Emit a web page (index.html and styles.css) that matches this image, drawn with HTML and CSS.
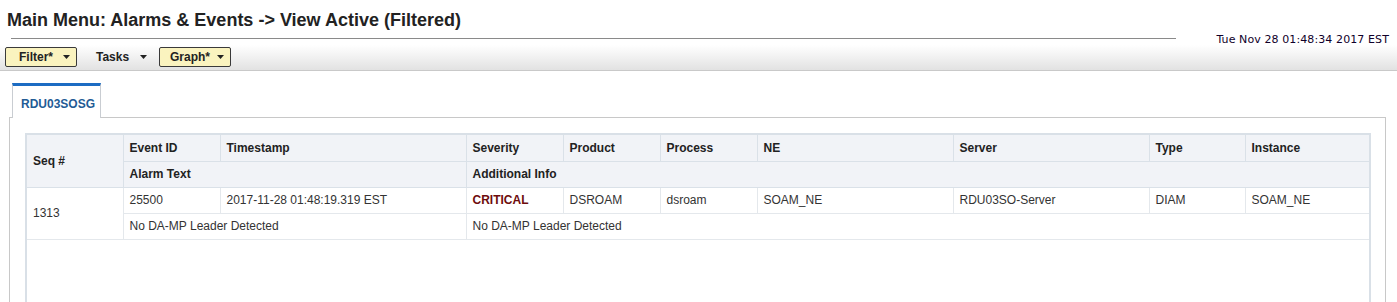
FILE: index.html
```html
<!DOCTYPE html>
<html>
<head>
<meta charset="utf-8">
<link rel="stylesheet" href="styles.css">
</head>
<body>
<div class="page-head">
  <h1 class="title">Main Menu: Alarms &amp; Events -&gt; View Active (Filtered)</h1>
  <div class="rule-row">
    <div class="rule"></div>
    <div class="clock">Tue Nov 28 01:48:34 2017 EST</div>
  </div>
</div>
<div class="toolbar">
  <div class="menu menu-active menu-filter"><span>Filter*</span><svg class="caret" width="7" height="4" viewBox="0 0 7 4"><path d="M0 0H7L3.5 4Z" fill="#222"/></svg></div>
  <div class="menu menu-tasks"><span>Tasks</span><svg class="caret" width="7" height="4" viewBox="0 0 7 4"><path d="M0 0H7L3.5 4Z" fill="#222"/></svg></div>
  <div class="menu menu-active menu-graph"><span>Graph*</span><svg class="caret" width="7" height="4" viewBox="0 0 7 4"><path d="M0 0H7L3.5 4Z" fill="#222"/></svg></div>
</div>
<div class="tabs">
  <div class="tab">RDU03SOSG</div>
</div>
<div class="panel">
  <div class="grid-wrap">
    <table class="grid">
      <colgroup>
        <col class="c-seq"><col class="c-eid"><col class="c-ts"><col class="c-sev"><col class="c-prod"><col class="c-proc"><col class="c-ne"><col class="c-srv"><col class="c-type"><col class="c-inst">
      </colgroup>
      <thead>
        <tr>
          <th rowspan="2">Seq #</th>
          <th>Event ID</th>
          <th>Timestamp</th>
          <th>Severity</th>
          <th>Product</th>
          <th>Process</th>
          <th>NE</th>
          <th>Server</th>
          <th>Type</th>
          <th>Instance</th>
        </tr>
        <tr>
          <th colspan="2">Alarm Text</th>
          <th colspan="7">Additional Info</th>
        </tr>
      </thead>
      <tbody>
        <tr>
          <td rowspan="2">1313</td>
          <td>25500</td>
          <td>2017-11-28 01:48:19.319 EST</td>
          <td class="sev-critical">CRITICAL</td>
          <td>DSROAM</td>
          <td>dsroam</td>
          <td>SOAM_NE</td>
          <td>RDU03SO-Server</td>
          <td>DIAM</td>
          <td>SOAM_NE</td>
        </tr>
        <tr>
          <td colspan="2">No DA-MP Leader Detected</td>
          <td colspan="7">No DA-MP Leader Detected</td>
        </tr>
      </tbody>
    </table>
  </div>
</div>
</body>
</html>
```
FILE: styles.css
```css
* { box-sizing: border-box; }
html, body { margin: 0; padding: 0; background: #fff; }
body {
  font-family: "Liberation Sans", Arial, sans-serif;
  color: #222;
  height: 302px;
  overflow: hidden;
}

.title {
  margin: 0;
  padding: 9px 0 0 7px;
  font-size: 18px;
  line-height: 22px;
  font-weight: bold;
  color: #222;
}

.rule-row {
  display: flex;
  align-items: center;
  height: 14px;
}
.rule {
  flex: 0 0 1165px;
  margin-left: 11px;
  height: 1px;
  background: #8a8a8a;
}
.clock {
  margin-left: auto;
  padding-right: 8px;
  margin-top: 3px;
  font-family: "DejaVu Sans", Verdana, sans-serif;
  font-size: 11px;
  line-height: 14px;
  letter-spacing: 0.1px;
  color: #10002a;
}

.toolbar {
  display: flex;
  align-items: flex-start;
  height: 26px;
  padding: 2px 0 0 5px;
  background: linear-gradient(#ffffff, #e2e2e2);
  border-bottom: 1px solid #c9c9c9;
}
.menu {
  display: flex;
  align-items: center;
  height: 20px;
  font-size: 12px;
  font-weight: bold;
  color: #222;
}
.menu-active {
  width: 72px;
  padding-left: 13px;
  background: #faf3bf;
  border: 1px solid #3a3a3a;
  border-radius: 2px;
}
.menu-graph { margin-left: 11px; padding-left: 10px; }
.menu-tasks {
  width: 52px;
  margin-left: 19px;
}
.caret {
  display: block;
  margin-left: auto;
  margin-right: 6px;
}
.menu-tasks .caret { margin-right: 1px; }

.tabs {
  display: flex;
  padding-left: 12px;
  margin-top: 12px;
  margin-bottom: -1px;
}
.tab {
  position: relative;
  z-index: 1;
  width: 89px;
  height: 35px;
  padding: 10px 0 0 8px;
  background: #fff;
  border-top: 3px solid #1c6cc3;
  border-left: 1px solid #c9cdd2;
  border-right: 1px solid #c9cdd2;
  font-size: 12px;
  line-height: 16px;
  font-weight: bold;
  color: #235b95;
}

.panel {
  margin-left: 9px;
  width: 1377px;
  height: 185px;
  padding: 15px 0 0 15px;
  border: 1px solid #c8c8c8;
  border-bottom: 0;
}
.grid-wrap {
  width: 1346px;
  height: 169px;
  border: 2px solid #d9e0e7;
  border-bottom: 0;
}
.grid {
  width: 100%;
  border-collapse: collapse;
  table-layout: fixed;
  font-size: 12px;
}
.c-seq { width: 96px; }
.c-eid { width: 97px; }
.c-ts { width: 246px; }
.c-sev { width: 97px; }
.c-prod { width: 97px; }
.c-proc { width: 97px; }
.c-ne { width: 196px; }
.c-srv { width: 196px; }
.c-type { width: 96px; }
.c-inst { width: auto; }

.grid th, .grid td {
  height: 26px;
  padding: 0 6px;
  text-align: left;
  white-space: nowrap;
  vertical-align: middle;
}
.grid th {
  background: #f1f3f7;
  border: 1px solid #dae1e8;
  font-weight: bold;
  color: #222;
}
.grid thead tr:first-child th { border-top: 0; }
.grid th:first-child, .grid td:first-child { border-left: 0; }
.grid td {
  border: 1px solid #e4e8ec;
  color: #333;
}
.grid tr th:last-child, .grid tr td:last-child { border-right: 0; }
.sev-critical { color: #6e0c0c !important; font-weight: bold; }
```
